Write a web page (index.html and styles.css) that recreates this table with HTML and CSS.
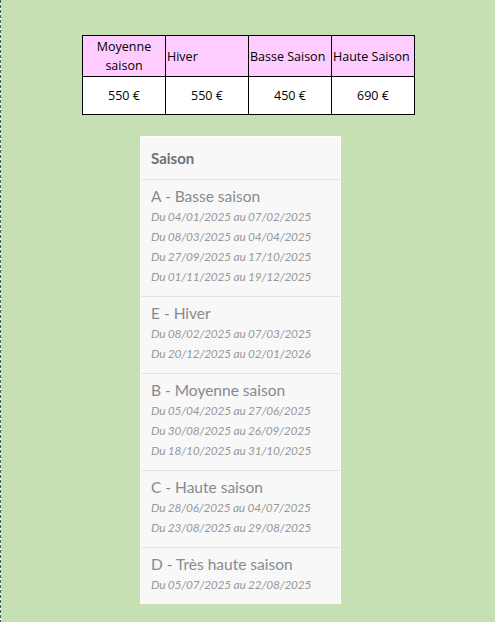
FILE: index.html
```html
<!DOCTYPE html>
<html lang="fr">
<head>
<meta charset="utf-8">
<link rel="stylesheet" href="styles.css">
</head>
<body>
<div class="page">
  <table class="prices">
    <tr class="head">
      <td class="center">Moyenne saison</td>
      <td>Hiver</td>
      <td>Basse Saison</td>
      <td>Haute Saison</td>
    </tr>
    <tr class="vals">
      <td>550 €</td>
      <td>550 €</td>
      <td>450 €</td>
      <td>690 €</td>
    </tr>
  </table>

  <div class="card">
    <div class="card-head">Saison</div>
    <div class="item">
      <div class="title">A - Basse saison</div>
      <div class="date">Du 04/01/2025 au 07/02/2025</div>
      <div class="date">Du 08/03/2025 au 04/04/2025</div>
      <div class="date">Du 27/09/2025 au 17/10/2025</div>
      <div class="date">Du 01/11/2025 au 19/12/2025</div>
    </div>
    <div class="item">
      <div class="title">E - Hiver</div>
      <div class="date">Du 08/02/2025 au 07/03/2025</div>
      <div class="date">Du 20/12/2025 au 02/01/2026</div>
    </div>
    <div class="item">
      <div class="title">B - Moyenne saison</div>
      <div class="date">Du 05/04/2025 au 27/06/2025</div>
      <div class="date">Du 30/08/2025 au 26/09/2025</div>
      <div class="date">Du 18/10/2025 au 31/10/2025</div>
    </div>
    <div class="item">
      <div class="title">C - Haute saison</div>
      <div class="date">Du 28/06/2025 au 04/07/2025</div>
      <div class="date">Du 23/08/2025 au 29/08/2025</div>
    </div>
    <div class="item">
      <div class="title">D - Très haute saison</div>
      <div class="date">Du 05/07/2025 au 22/08/2025</div>
    </div>
  </div>
</div>
</body>
</html>
```
FILE: styles.css
```css
html, body {
  margin: 0;
  padding: 0;
  height: 100%;
}
body {
  background:
    repeating-linear-gradient(to bottom, #2f6e45 0 3px, #ffffff 3px 5px) left top / 1px 100% no-repeat,
    #c6e0b4;
}
.page {
  padding: 35px 0 0 82px;
}
.prices {
  border-collapse: collapse;
  font-family: "Open Sans", sans-serif;
  font-size: 12.5px;
  color: #000;
}
.prices td {
  border: 1px solid #000;
  width: 83px;
  padding: 0 1px;
  box-sizing: border-box;
}
.head td {
  background: #ffccff;
  height: 41px;
  line-height: 19px;
  text-align: left;
}
.head td.center {
  text-align: center;
}
.vals td {
  background: #fff;
  height: 38px;
  text-align: center;
}
.card {
  margin: 21px 0 0 58px;
  width: 201px;
  box-sizing: border-box;
  background: #f8f8f9;
  border: 1px solid #fff;
  border-bottom: 0;
  font-family: "Lato", sans-serif;
}
.card-head {
  height: 42px;
  padding-left: 10px;
  display: flex;
  align-items: center;
  font-weight: bold;
  font-size: 15px;
  color: #6c7176;
}
.item {
  border-top: 1px solid #e3e3e3;
  padding: 6px 10px 9px;
}
.title {
  font-size: 15.5px;
  line-height: 21px;
  color: #868a8e;
}
.date {
  font-style: italic;
  font-size: 11.9px;
  letter-spacing: -0.2px;
  line-height: 20px;
  color: #94989c;
}
```
